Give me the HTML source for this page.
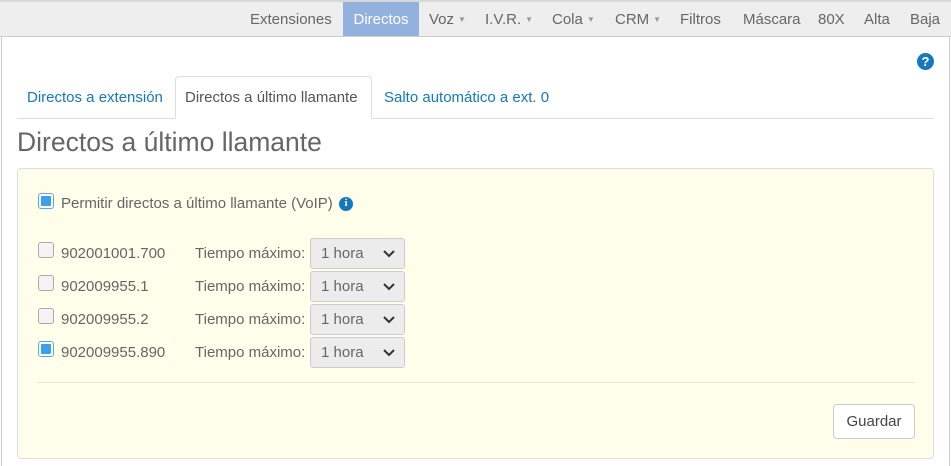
<!DOCTYPE html>
<html><head><meta charset="utf-8"><style>
*{box-sizing:border-box}
body{margin:0;width:951px;height:466px;overflow:hidden;background:#fff;font-family:"Liberation Sans",sans-serif;color:#555;position:relative}
.nav{position:absolute;left:0;top:0;width:951px;height:37px;background:#eee;border-top:2px solid #d8d8d8;border-bottom:1px solid #ccc}
.nav .it{position:absolute;top:0;height:34px;line-height:35px;font-size:15px;color:#666}
.nav .act{background:#93b1de;color:#fff}
.car{font-size:8px;color:#999;vertical-align:2px;margin-left:4px}
.frame{position:absolute;left:1px;top:37px;width:949px;height:429px;border-left:1px solid #ccc;border-right:1px solid #ccc}
.help{position:absolute;left:917px;top:53px;width:17px;height:17px;border-radius:50%;background:#1478c0;color:#fff;font-weight:bold;font-size:13px;text-align:center;line-height:17px}
.tabs{position:absolute;left:17px;top:118px;width:917px;border-top:1px solid #ddd}
.tab{position:absolute;top:89px;font-size:15px;color:#1478c0}
.tabact{position:absolute;left:175px;top:76px;width:197px;height:43px;border:1px solid #ddd;border-bottom:1px solid #fff;border-radius:4px 4px 0 0;background:#fff;font-size:15px;color:#555;padding-left:9px;padding-top:12px}
h1{position:absolute;left:17px;top:127px;margin:0;font-weight:normal;font-size:26.5px;color:#666}
.panel{position:absolute;left:17px;top:168px;width:917px;height:291px;background:#fefeeb;border:1px solid #ddd;border-radius:4px}
.cb{position:absolute;width:16px;height:16px;border:1px solid #aaa;border-radius:3px;background:#f4f4f4}
.cb.on{border-color:#5aa9e6;background:#fff}
.cb.on:after{content:"";position:absolute;left:2px;top:2px;width:10px;height:10px;background:#3aa0ea;border-radius:1px}
.t{position:absolute;font-size:15px;color:#666}
.sel{position:absolute;left:310px;width:95px;height:31px;border:1px solid #ccc;border-radius:3px;background:#ececec;font-size:15px;color:#666;line-height:29px;padding-left:10px}
.sel svg{position:absolute;right:9px;top:11px}
.hr{position:absolute;left:37px;top:382px;width:878px;border-top:1px solid #e8e8d8}
.btn{position:absolute;left:833px;top:404px;width:82px;height:35px;border:1px solid #ccc;border-radius:4px;background:#fff;font-size:15px;color:#444;text-align:center;line-height:33px}
.info{position:absolute;left:339px;top:197px;width:14px;height:14px;border-radius:50%;background:#1478c0;color:#fff;font-weight:bold;font-size:10px;text-align:center;line-height:14px;font-family:"Liberation Serif",serif}
</style></head><body>
<div class="nav">
<span class="it" style="left:250px">Extensiones</span>
<span class="it act" style="left:343px;width:76px;text-align:center">Directos</span>
<span class="it" style="left:429px">Voz<span class="car">▼</span></span>
<span class="it" style="left:485px">I.V.R.<span class="car">▼</span></span>
<span class="it" style="left:552px">Cola<span class="car">▼</span></span>
<span class="it" style="left:615px">CRM<span class="car">▼</span></span>
<span class="it" style="left:680px">Filtros</span>
<span class="it" style="left:743px">Máscara</span>
<span class="it" style="left:818px">80X</span>
<span class="it" style="left:864px">Alta</span>
<span class="it" style="left:910px">Baja</span>
</div>
<div class="frame"></div>
<div class="help">?</div>
<div class="tabs"></div>
<span class="tab" style="left:27px">Directos a extensión</span>
<div class="tabact">Directos a último llamante</div>
<span class="tab" style="left:384px">Salto automático a ext. 0</span>
<h1>Directos a último llamante</h1>
<div class="panel"></div>
<div class="cb on" style="left:38px;top:193px"></div>
<span class="t" style="left:61px;top:195px">Permitir directos a último llamante (VoIP)</span>
<div class="info">i</div>

<div class="cb" style="left:38px;top:242px"></div><span class="t" style="left:61px;top:245px">902001001.700</span><span class="t" style="left:195px;top:245px">Tiempo máximo:</span>
<div class="sel" style="top:238px">1 hora<svg width="12" height="8"><path d="M1 1l5 5 5-5" stroke="#333" stroke-width="2" fill="none"/></svg></div>
<div class="cb" style="left:38px;top:275px"></div><span class="t" style="left:61px;top:278px">902009955.1</span><span class="t" style="left:195px;top:278px">Tiempo máximo:</span>
<div class="sel" style="top:271px">1 hora<svg width="12" height="8"><path d="M1 1l5 5 5-5" stroke="#333" stroke-width="2" fill="none"/></svg></div>
<div class="cb" style="left:38px;top:308px"></div><span class="t" style="left:61px;top:311px">902009955.2</span><span class="t" style="left:195px;top:311px">Tiempo máximo:</span>
<div class="sel" style="top:304px">1 hora<svg width="12" height="8"><path d="M1 1l5 5 5-5" stroke="#333" stroke-width="2" fill="none"/></svg></div>
<div class="cb on" style="left:38px;top:341px"></div><span class="t" style="left:61px;top:344px">902009955.890</span><span class="t" style="left:195px;top:344px">Tiempo máximo:</span>
<div class="sel" style="top:337px">1 hora<svg width="12" height="8"><path d="M1 1l5 5 5-5" stroke="#333" stroke-width="2" fill="none"/></svg></div>
<div class="hr"></div>
<div class="btn">Guardar</div>
</body></html>
